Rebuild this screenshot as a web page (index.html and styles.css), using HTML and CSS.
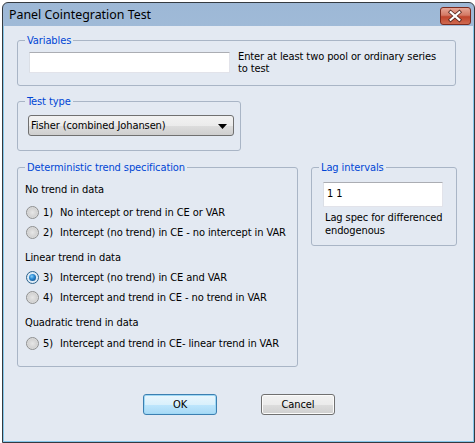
FILE: index.html
```html
<!DOCTYPE html>
<html>
<head>
<meta charset="utf-8">
<link rel="stylesheet" href="styles.css">
</head>
<body>
<div class="window">
  <div class="titlebar">
    <span class="title">Panel Cointegration Test</span>
    <div class="close">
      <svg width="31" height="18" viewBox="0 0 31 18">
        <path d="M11 5 L20 13 M20 5 L11 13" stroke="#5a2a22" stroke-width="4" stroke-linecap="square"/>
        <path d="M11 5 L20 13 M20 5 L11 13" stroke="#ffffff" stroke-width="2.2" stroke-linecap="square"/>
      </svg>
    </div>
  </div>
  <div class="client">
    <div class="group g-vars">
      <span class="legend"><u>V</u>ariables</span>
      <div class="vars-row">
        <div class="textbox tb-vars"></div>
        <p class="hint">Enter at least two pool or ordinary series<br>to test</p>
      </div>
    </div>

    <div class="group g-type">
      <span class="legend">Test type</span>
      <div class="combo">
        <span class="combo-text">Fisher (combined Johansen)</span>
        <svg class="combo-arrow" width="9" height="5" viewBox="0 0 9 5"><path d="M0 0 H9 L4.5 5 Z" fill="#000"/></svg>
      </div>
    </div>

    <div class="row3">
      <div class="group g-trend">
        <span class="legend">Deterministic trend specification</span>
        <div class="line head h1">No trend in data</div>
        <div class="line radio-row r1"><span class="radio"></span><span class="num">1)</span><span>No intercept or trend in CE or VAR</span></div>
        <div class="line radio-row"><span class="radio"></span><span class="num">2)</span><span>Intercept (no trend) in CE - no intercept in VAR</span></div>
        <div class="line head h2">Linear trend in data</div>
        <div class="line radio-row"><span class="radio checked"></span><span class="num">3)</span><span>Intercept (no trend) in CE and VAR</span></div>
        <div class="line radio-row"><span class="radio"></span><span class="num">4)</span><span>Intercept and trend in CE - no trend in VAR</span></div>
        <div class="line head h3">Quadratic trend in data</div>
        <div class="line radio-row r5"><span class="radio"></span><span class="num">5)</span><span>Intercept and trend in CE- linear trend in VAR</span></div>
      </div>

      <div class="group g-lag">
        <span class="legend">Lag intervals</span>
        <div class="textbox tb-lag">1 1</div>
        <p class="lag-note">Lag spec for differenced<br>endogenous</p>
      </div>
    </div>

    <div class="buttons">
      <div class="btn btn-ok">OK</div>
      <div class="btn btn-cancel">Cancel</div>
    </div>
  </div>
</div>
</body>
</html>
```

FILE: styles.css
```css
html, body {
  margin: 0;
  padding: 0;
}
body {
  width: 475px;
  height: 443px;
  background: #ffffff;
  overflow: hidden;
  font-family: "DejaVu Sans Condensed", "DejaVu Sans", sans-serif;
  font-size: 11px;
  letter-spacing: -0.1px;
  color: #000;
}
.window {
  margin: 2px 0 0 2px;
  width: 473px;
  height: 441px;
  box-sizing: border-box;
  border: 1px solid #343a40;
  border-radius: 6px 6px 0 0;
  background: linear-gradient(#9db8d6, #b9cfe6 60%, #c3d7ec);
  display: flex;
  flex-direction: column;
}
.titlebar {
  height: 23px;
  flex: none;
  display: flex;
  align-items: center;
  justify-content: space-between;
}
.title {
  font-family: "Noto Sans", "Open Sans", sans-serif;
  font-size: 12.4px;
  letter-spacing: 0;
  color: #000;
  margin-left: 6px;
  margin-top: -1px;
}
.close {
  width: 31px;
  height: 18px;
  margin-right: 3px;
  margin-top: 2px;
  box-sizing: border-box;
  border: 1px solid #7a2a1e;
  border-radius: 3px;
  background: linear-gradient(#e6a595, #d47965 45%, #c0442c 55%, #cf6a50);
  display: flex;
}
.close svg {
  margin: -1px 0 0 -1px;
}
.client {
  flex: 1;
  background: #e3e9f2;
  border: 1px solid #86c7ea;
  border-top: none;
  padding: 14px 0 0 13px;
}
.group {
  position: relative;
  box-sizing: border-box;
  border: 1px solid #a9b5c6;
  border-radius: 3px;
}
.legend {
  position: absolute;
  top: -7px;
  left: 7px;
  padding: 0 2px;
  line-height: 13px;
  background: #e3e9f2;
  color: #0046d5;
}
.legend u {
  text-decoration: none;
}
.g-vars {
  width: 439px;
  height: 46px;
  padding: 11px 0 0 11px;
}
.vars-row {
  display: flex;
  align-items: flex-start;
}
.textbox {
  box-sizing: border-box;
  background: #fff;
  border: 1px solid #e2e3ea;
  border-top-color: #abadb3;
  border-left-color: #dbdfe6;
}
.tb-vars {
  width: 201px;
  height: 21px;
}
.hint {
  margin: -1px 0 0 8px;
  line-height: 12px;
}
.g-type {
  width: 224px;
  height: 50px;
  margin-top: 15px;
  padding: 13px 0 0 10px;
}
.combo {
  width: 206px;
  height: 21px;
  box-sizing: border-box;
  border: 1px solid #707070;
  border-radius: 3px;
  background: linear-gradient(#f2f2f2, #ebebeb 50%, #dddddd 50%, #cfcfcf);
  display: flex;
  align-items: center;
  justify-content: space-between;
  padding: 0 6px 0 2px;
}
.combo-arrow {
  margin-top: 1px;
}
.row3 {
  display: flex;
  align-items: flex-start;
  margin-top: 16px;
}
.g-trend {
  width: 281px;
  height: 200px;
  padding: 11px 0 0 7px;
}
.line {
  height: 20px;
  display: flex;
  align-items: center;
}
.h2, .h3 {
  margin-top: 5px;
}
.r1 {
  margin-top: 3px;
}
.r5 {
  margin-top: 1px;
}
.radio {
  width: 13px;
  height: 13px;
  box-sizing: border-box;
  border-radius: 50%;
  border: 1px solid #8e8f8f;
  background: radial-gradient(circle at 50% 50%, #e6e6e6 0, #d3d3d3 55%, #f4f4f4 100%);
  margin-left: 1px;
  margin-right: 4px;
  display: flex;
  align-items: center;
  justify-content: center;
}
.radio.checked {
  border-color: #2c628b;
  background: radial-gradient(circle at 50% 50%, #eaf3fb 0, #d6e6f3 100%);
}
.radio.checked::after {
  content: "";
  width: 7px;
  height: 7px;
  border-radius: 50%;
  background: radial-gradient(circle at 40% 35%, #8cd0f6 0, #2a8ad4 40%, #0f3f73 100%);
}
.num {
  width: 17px;
}
.g-lag {
  width: 146px;
  height: 79px;
  margin-left: 13px;
  padding: 14px 0 0 11px;
}
.tb-lag {
  width: 120px;
  height: 25px;
  padding-left: 3px;
  line-height: 22px;
}
.lag-note {
  margin: 4px 0 0 2px;
  line-height: 13px;
}
.buttons {
  display: flex;
  margin: 27px 0 0 126px;
}
.btn {
  width: 74px;
  height: 21px;
  box-sizing: border-box;
  border-radius: 3px;
  display: flex;
  align-items: center;
  justify-content: center;
}
.btn-ok {
  border: 1px solid #3c7fb1;
  background: linear-gradient(#eaf6fd, #d9f0fc 50%, #bee6fd 50%, #a7d9f5);
  box-shadow: inset 0 0 0 1px #9fd8f5;
}
.btn-cancel {
  margin-left: 44px;
  border: 1px solid #707070;
  background: linear-gradient(#f2f2f2, #ebebeb 50%, #dddddd 50%, #cfcfcf);
  box-shadow: inset 0 0 0 1px #fbfbfb;
}
```
